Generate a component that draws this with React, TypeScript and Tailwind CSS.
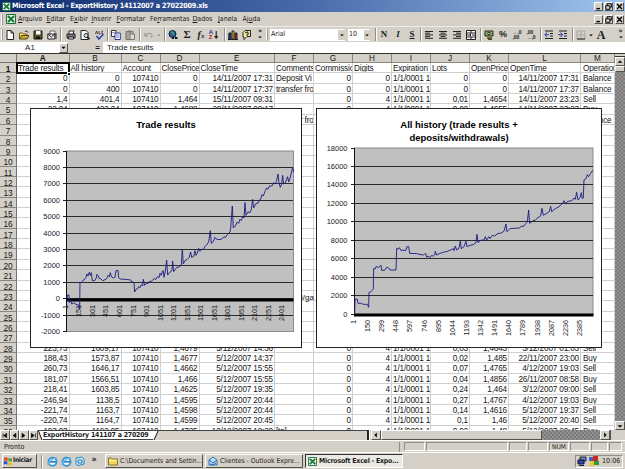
import React from "react";

const raised = "bg-[#d4d0c8] border border-t-white border-l-white border-r-[#55534e] border-b-[#55534e]";
const sunken = "border border-t-[#918e87] border-l-[#918e87] border-r-white border-b-white";
const ui = "font-['DejaVu_Sans_Condensed','DejaVu_Sans',sans-serif]";
const arial = "font-['Liberation_Sans',Arial,sans-serif]";

const Ico = ({ children, s = 10 }: { children: React.ReactNode; s?: number }) => (
  <svg width={s} height={s} viewBox="0 0 10 10" className="block shrink-0" fill="none" stroke="#222" strokeWidth="1">{children}</svg>
);
const Slot = ({ children }: { children: React.ReactNode }) => <div className="flex h-full w-[14px] shrink-0 items-center justify-center">{children}</div>;
const Sep = () => <div className="h-[13px] w-[2px] shrink-0 border-l border-r border-l-[#8f8c85] border-r-white" />;
const Grip = () => <div className="h-[11px] w-[2px] shrink-0 border-l border-r border-l-white border-r-[#9b988f]" />;

const Arrow = ({ d, s = 10 }: { d: string; s?: number }) => (
  <Ico s={s}><path d={d} fill="#000" stroke="none" /></Ico>
);
const DOWN = "M2 4h6l-3 3z";
const UP = "M2 6h6l-3-3z";
const LEFT = "M6 2v6l-3-3z";
const RIGHT = "M4 2v6l3-3z";

function WinButtons() {
  return (
    <div className="flex pr-[1px]">
      <div className={`${raised} mr-[1px] flex h-[9px] w-[9px] items-center justify-center`}><Ico s={7}><path d="M2 8h5" strokeWidth="2" stroke="#000" /></Ico></div>
      <div className={`${raised} mr-[2px] flex h-[9px] w-[9px] items-center justify-center`}><Ico s={7}><path d="M3 4V1h6v5H7M1 4h6v5H1z" strokeWidth="1.4" stroke="#000" /></Ico></div>
      <div className={`${raised} flex h-[9px] w-[9px] items-center justify-center`}><Ico s={7}><path d="M1.5 1.5l7 7M8.500 1.500l-7 7" strokeWidth="1.9" stroke="#000" /></Ico></div>
    </div>
  );
}

const XL = ({ s = 9 }: { s?: number }) => (
  <Ico s={s}><path d="M.5.5h9v9h-9z" fill="#e3f1e3" stroke="#1d6b35" /><path d="M2 2l6 6M8 2L2 8" stroke="#1d7a3a" strokeWidth="2" /></Ico>
);

const menus: [string, string, string, string][] = [
  ["", "A", "rquivo", "w-[28.500px]"], ["", "E", "ditar", "w-[23.500px]"], ["E", "x", "ibir", "w-[21.500px]"],
  ["", "I", "nserir", "w-[25px]"], ["", "F", "ormatar", "w-[33.500px]"], ["Fe", "r", "ramentas", "w-[42.500px]"],
  ["", "D", "ados", "w-[25.500px]"], ["", "J", "anela", "w-[24.500px]"], ["Aj", "u", "da", "w-[25px]"],
];

const Lines = ({ a }: { a: number[] }) => (
  <Ico>{a.map((w, i) => <path key={i} d={`M${w < 0 ? 9 + w : w > 20 ? 5 - (w - 20) / 2 : 1} ${1.5 + i * 1.7}h${w < 0 ? -w : w > 20 ? w - 20 : w}`} />)}</Ico>
);

function Toolbar() {
  return (
    <div className="flex h-[16px] items-center border-t border-t-[#efede8] bg-[#d4d0c8]">
      <div className="flex h-full w-[60px] items-center pl-[1px]"><Grip />
        <Slot><Ico><path d="M2 .5h4l2.500 2.500v6.500H2z" fill="#fff" /><path d="M6 .5V3h2.500" /></Ico></Slot>
        <Slot><Ico><path d="M.5 9V3h3l1 1H8v2" fill="#f5dc6b" stroke="#6f6212" /><path d="M.5 9L2.500 5.500H10L8 9z" fill="#c7a92c" stroke="#544a0b" /><path d="M6 1.500q2-1.500 3 1" /></Ico></Slot>
        <Slot><Ico><path d="M1 1h8v8H1z" fill="#55552b" stroke="#151508" /><path d="M3 1h4.500v3.500H3z" fill="#fff" stroke="none" /><path d="M3 6.500h4V9H3z" fill="#111" stroke="none" /></Ico></Slot>
        <Slot><Ico><path d="M3 1h5v4H3z" fill="#fff" stroke="#666" /><path d="M.8 4h7v5h-7z" fill="#eee" /><path d="M.8 4l3.500 3 3.500-3M9 3v6" /></Ico></Slot>
      </div>
      <Sep />
      <div className="flex h-full w-[45px] items-center pl-[2px]">
        <Slot><Ico><path d="M3 4V1h5L7 4" fill="#fff" /><path d="M1 4h8v4H1z" fill="#777" /><path d="M2.500 7h5v2h-5z" fill="#fff" /></Ico></Slot>
        <Slot><Ico><path d="M1 .5h5l2 2v7H1z" fill="#fff" /><circle cx="6" cy="5.500" r="2" fill="#cfeaf0" /><path d="M7.500 7l2 2.500" strokeWidth="1.600" /></Ico></Slot>
        <Slot><Ico><path d="M1.500 4l1-3 1 3M5 1v3h1.500M9 1H8v3h1" strokeWidth=".8" /><path d="M2.500 6L5 9l4.500-5" stroke="#2340a8" strokeWidth="1.500" /></Ico></Slot>
      </div>
      <Sep />
      <div className="flex h-full w-[30px] items-center">
        <Slot><Ico><path d="M.5.5h4.500v6H.5z" fill="#fff" stroke="#334" /><path d="M4 3h5.300v6.500H4z" fill="#fff" stroke="#2a3a90" /><path d="M5 5h3M5 7h3M1.500 2.500h2" stroke="#2a3a90" strokeWidth=".7" /></Ico></Slot>
        <Slot><Ico><path d="M1 1.500h7v8H1z" fill="#aaa79d" stroke="#77756e" /><path d="M3 .5h3v2H3z" fill="#777" stroke="none" /><path d="M5 4h4.500v5.500H5z" fill="#ddd" stroke="#777" /></Ico></Slot>
      </div>
      <Sep />
      <div className="flex h-full w-[23px] items-center pl-[1px]">
        <Slot><Ico><path d="M1 3v3h3M1.500 5.500q2-3 5-2t1 4" stroke="#918e86" /></Ico></Slot>
        <Ico s={6}><path d="M2 4h6l-3 3z" fill="#888" stroke="none" /></Ico>
      </div>
      <Sep />
      <div className="flex h-full w-[58px] items-center">
        <Slot><Ico><circle cx="4.500" cy="4" r="3.500" fill="#245a9c" stroke="#123" /><path d="M3 2q3 0 2 3" stroke="#45ab58" strokeWidth="1.500" /><path d="M4 8h2M7 8h2.500" stroke="#111" strokeWidth="2" /></Ico></Slot>
        <Slot><span className="font-['Liberation_Serif',serif] text-[11px] font-bold leading-none">Σ</span></Slot>
        <Slot><span className="font-['Liberation_Serif',serif] text-[10px] font-bold italic leading-none">f<span className="text-[7px]">x</span></span></Slot>
        <Slot><span className={`${arial} flex flex-col text-[6px] font-bold leading-[5px]`}><span className="text-[#2a3aa8]">A</span><span className="text-[#a02323]">Z</span></span><Ico s={8}><path d="M4 0v8M2 6.500L4 9l2-2.500" strokeWidth="1.400" /></Ico></Slot>
      </div>
      <Sep />
      <div className="flex h-full w-[40px] items-center">
        <Slot><Ico><path d="M0 3v6.500h10" /><path d="M1 3h2v6H1z" fill="#2437a5" /><path d="M4 1h2v8H4z" fill="#edc92a" /><path d="M7 3h2v6H7z" fill="#b42020" /></Ico></Slot>
        <Slot><Ico><path d="M1 2.500L3 .5h5.500v6H5l-3 3V7H1z" fill="#f5eda4" /><path d="M3.500 3q2-2 2.500 0T5 5v.8" strokeWidth="1.200" /></Ico></Slot>
        <div className="flex w-[12px] flex-col items-center"><span className="text-[7px] font-bold leading-[5px]">»</span><Arrow d={DOWN} s={6} /></div>
      </div>
      <Grip />
      <div className="flex h-full w-[107px] items-center pl-[2px]">
        <div className={`${ui} flex h-[12px] w-[75px] items-center justify-between bg-white pl-[1px] text-[7px]`}>Arial<span className="flex h-[10px] w-[7px] items-center justify-center bg-[#d4d0c8]"><Arrow d={DOWN} s={6} /></span></div>
        <div className={`${ui} ml-[3px] flex h-[12px] w-[22px] items-center justify-between bg-white pl-[1px] text-[7px]`}>10<span className="flex h-[10px] w-[6px] items-center justify-center bg-[#d4d0c8]"><Arrow d={DOWN} s={6} /></span></div>
      </div>
      <Sep />
      <div className="flex h-full w-[43px] items-center font-['Liberation_Serif',serif] text-[9px] font-bold leading-none">
        <Slot>N</Slot><Slot><i>I</i></Slot><Slot><u>S</u></Slot>
      </div>
      <Sep />
      <div className="flex h-full w-[58px] items-center">
        <Slot><Lines a={[8, 5, 8, 5, 8]} /></Slot>
        <Slot><Lines a={[28, 25, 28, 25, 28]} /></Slot>
        <Slot><Lines a={[-8, -5, -8, -5, -8]} /></Slot>
        <Slot><Ico><path d="M.5.5h9v9h-9zM.5 3h9M.5 7h9M5 .5V3M5 7v2.500" fill="#fff" /><path d="M1 5h3M9 5H6M4.500 3.500v3" /></Ico></Slot>
      </div>
      <Sep />
      <div className="flex h-full w-[58px] items-center">
        <Slot><Ico><path d="M1 1h8v5H1z" fill="#8ea864" stroke="#222d14" /><circle cx="5" cy="3.500" r="1.200" fill="#eee" /><path d="M3 8h5M4 9.500h4" stroke="#555010" strokeWidth="1.500" /></Ico></Slot>
        <Slot><span className={`${arial} text-[9px] font-bold leading-none`}>%</span></Slot>
        <Slot><span className={`${arial} text-[5px] font-bold leading-[5px]`}><span className="text-[#2a3aa8]">←</span>,0<br />,00</span></Slot>
        <Slot><span className={`${arial} text-[5px] font-bold leading-[5px]`}>,00<br /><span className="text-[#2a3aa8]">→</span>,0</span></Slot>
      </div>
      <Sep />
      <div className="flex h-full w-[30px] items-center">
        <Slot><Ico><path d="M1 1h8M6 3.500h3M6 6h3M1 8.500h8" /><path d="M5 4.700H1M3 2.500L.8 4.700 3 7" stroke="#2437a5" /></Ico></Slot>
        <Slot><Ico><path d="M1 1h8M6 3.500h3M6 6h3M1 8.500h8" /><path d="M0 4.700h4M2.500 2.500l2.200 2.200L2.500 7" stroke="#2437a5" /></Ico></Slot>
      </div>
      <Sep />
      <div className="flex h-full grow items-center">
        <Slot><Ico><path d="M1 1h8v8H1zM5 1v8M1 5h8" stroke="#aaa79f" /><path d="M1 9h8" /></Ico></Slot>
        <Arrow d={DOWN} s={6} />
        <Slot><span className="font-['Liberation_Serif',serif] text-[12px] font-bold leading-none">A</span></Slot>
      </div>
      <div className="flex w-[9px] flex-col items-center"><span className="text-[7px] font-bold leading-[5px]">»</span><Arrow d={DOWN} s={6} /></div>
    </div>
  );
}

const cols: { n: string; w: string; r: boolean }[] = [
  { n: "A", w: "w-[52.500px]", r: true }, { n: "B", w: "w-[52px]", r: true }, { n: "C", w: "w-[39px]", r: true },
  { n: "D", w: "w-[39px]", r: true }, { n: "E", w: "w-[75.500px]", r: true }, { n: "F", w: "w-[39px]", r: false },
  { n: "G", w: "w-[39px]", r: true }, { n: "H", w: "w-[39px]", r: true }, { n: "I", w: "w-[39px]", r: false },
  { n: "J", w: "w-[39px]", r: true }, { n: "K", w: "w-[39px]", r: true }, { n: "L", w: "w-[72px]", r: true },
  { n: "M", w: "w-[34px]", r: false },
];
const E = "1/1/0001 1";
const data: Record<number, string[]> = {
  1: ["Trade results", "All history", "Account", "ClosePrice", "CloseTime", "Comments", "Commission", "Digits", "Expiration", "Lots", "OpenPrice", "OpenTime", "Operation"],
  2: ["0", "0", "107410", "0", "14/11/2007 17:31", "Deposit Vi", "0", "0", E, "0", "0", "14/11/2007 17:31", "Balance"],
  3: ["0", "400", "107410", "0", "14/11/2007 17:37", "transfer fro", "0", "0", E, "0", "0", "14/11/2007 17:37", "Balance"],
  4: ["1,4", "401,4", "107410", "1,464", "15/11/2007 09:31", "", "0", "4", E, "0,01", "1,4654", "14/11/2007 23:23", "Sell"],
  5: ["22,04", "422,04", "107410", "1,4688", "20/11/2007 09:17", "", "0", "4", E, "0,02", "1,4655", "14/11/2007 23:23", "Buy"],
  6: ["", "", "", "", "", "transfer fro", "", "", "", "", "", "", "Balance"],
  28: ["223,73", "1609,17", "107410", "1,4679", "5/12/2007 14:36", "", "0", "4", E, "0,03", "1,4643", "3/12/2007 01:03", "Sell"],
  29: ["188,43", "1573,87", "107410", "1,4677", "5/12/2007 14:37", "", "0", "4", E, "0,02", "1,485", "22/11/2007 23:00", "Buy"],
  30: ["260,73", "1646,17", "107410", "1,4662", "5/12/2007 15:55", "", "0", "4", E, "0,07", "1,4765", "4/12/2007 19:03", "Sell"],
  31: ["181,07", "1566,51", "107410", "1,466", "5/12/2007 15:55", "", "0", "4", E, "0,04", "1,4856", "26/11/2007 08:58", "Buy"],
  32: ["218,41", "1603,85", "107410", "1,4625", "5/12/2007 19:35", "", "0", "4", E, "0,24", "1,464", "3/12/2007 09:00", "Sell"],
  33: ["-246,94", "1138,5", "107410", "1,4595", "5/12/2007 20:44", "", "0", "4", E, "0,27", "1,4767", "4/12/2007 19:03", "Buy"],
  34: ["-221,74", "1163,7", "107410", "1,4598", "5/12/2007 20:44", "", "0", "4", E, "0,14", "1,4616", "5/12/2007 19:37", "Sell"],
  35: ["-220,74", "1164,7", "107410", "1,4599", "5/12/2007 20:45", "", "0", "4", E, "0,1", "1,46", "5/12/2007 20:40", "Sell"],
  36: ["-193,03", "1192,95", "107410", "1,4725", "10/12/2007 10:20", "[tp]", "0", "4", E, "0,02", "1,48", "5/12/2007 20:45", "Buy"],
};

function Sheet() {
  const rows = Array.from({ length: 36 }, (_, i) => i + 1);
  return (
    <div className={`${arial} relative h-[377px] w-[615px] overflow-hidden bg-white text-[8.200px] text-[#161616]`}>
      <div className="flex h-[10px] border-t border-t-[#333] bg-[#d4d0c8] leading-[10px]">
        <div className="w-[17px] shrink-0 border-b border-r border-[#77746d]" />
        {cols.map((c) => (
          <div key={c.n} className={`${c.w} shrink-0 border-b border-r border-[#8a8780] text-center ${c.n === "A" ? "font-bold" : ""}`}>{c.n}</div>
        ))}
      </div>
      {rows.map((r) => (
        <div key={r} className="flex h-[10.370px] leading-[12px]">
          <div className={`w-[17px] shrink-0 border-b border-r border-b-[#8a8780] border-r-[#77746d] bg-[#d4d0c8] text-center text-[8.300px] ${r === 1 ? "font-bold" : ""}`}>{r}</div>
          {cols.map((c, i) => (
            <div key={c.n} className={`${c.w} shrink-0 overflow-hidden whitespace-nowrap border-b border-r border-[#cfcfcf] pr-[1px] tracking-[-0.160px] ${c.n === "M" ? "pl-[2px]" : "pl-[1px]"} ${c.r && r > 1 ? "text-right" : "text-left"}`}>{data[r]?.[i] ?? ""}</div>
          ))}
        </div>
      ))}
      <div className="absolute left-[16px] top-[9px] h-[12px] w-[54px] border-2 border-black" />
      <div className="absolute left-[67px] top-[19px] h-[3px] w-[3px] border-l border-t border-white bg-black" />
      <div className="absolute left-[301px] top-[239px] h-[10px] text-[8px] leading-[11px]">l/ga</div>
      <div className="absolute left-[30px] top-[55px] h-[240px] w-[272px] border border-[#222] bg-white"><Chart1 /></div>
      <div className="absolute left-[316px] top-[55px] h-[240px] w-[286px] border border-[#222] bg-white"><Chart2 /></div>
    </div>
  );
}

const s1 = "200,328 203,315 207,315 208,338 212,330 215,342 222,338 228,343 236,345 237,355 239,357 240,278 244,277 248,272 252,270 258,262 261,252 264,258 268,247 271,256 274,248 277,272 284,272 288,266 291,253 294,256 297,265 303,267 308,272 318,268 322,263 324,256 328,260 331,248 334,260 340,264 345,262 348,242 354,241 356,263 361,267 375,268 392,270 396,276 402,277 404,306 408,298 413,296 416,290 420,293 424,284 428,288 430,268 434,286 440,280 444,281 448,274 454,274 462,266 468,268 472,260 478,262 480,250 484,256 487,244 490,242 492,262 496,244 500,210 503,255 508,248 512,246 516,240 518,213 521,245 526,238 530,232 536,232 544,225 547,178 550,222 555,212 562,208 568,202 572,186 575,202 582,198 585,182 588,196 592,190 596,175 600,184 606,178 610,178 615,170 620,164 626,156 631,122 634,160 640,155 645,142 650,148 660,149 668,145 672,140 676,143 682,134 690,126 692,115 697,48 700,114 706,108 712,96 716,100 720,88 724,92 728,80 732,84 735,38 738,76 744,66 750,68 754,58 758,28 761,54 768,40 774,40 778,30 782,28 786,14 790,18 796,2 800,-6 804,-2 808,-12 816,-12 822,-22 826,-18 830,-28 834,-48 837,-22 841,-8 845,-18 848,-44 851,-18 856,-22 863,-40 866,-24 871,-38 876,-60 878,-68 881,-54";
const s2 = "134,521 135,478 142,478 144,490 152,490 160,493 172,493 176,502 177,458 184,454 188,450 190,446 191,386 195,387 198,380 206,382 213,376 215,391 224,391 230,382 236,384 240,390 258,390 260,325 264,328 268,323 273,331 288,331 291,320 296,320 299,340 320,341 338,345 344,343 347,340 350,352 354,348 360,353 364,347 370,348 374,345 376,334 380,345 390,340 400,337 412,334 424,329 430,326 432,332 436,318 440,330 447,325 451,302 454,326 462,320 468,304 471,320 480,316 490,314 498,308 501,283 504,308 512,301 522,300 526,290 530,300 537,290 540,296 547,286 554,288 564,280 572,280 582,274 588,252 591,275 600,266 614,265 628,264 636,258 640,260 648,250 652,246 656,210 659,250 668,243 676,240 684,233 692,228 696,205 700,226 710,220 718,215 722,199 725,215 736,206 744,202 752,196 758,190 762,182 766,190 774,184 786,182 792,174 796,178 800,157 804,180 810,174 814,158 817,176 820,174 822,120 828,116 832,104 836,110 842,100 845,96 848,91";
const VLabels = ({ t, x0, dx, y }: { t: (string | number)[]; x0: number; dx: number; y: number }) => (
  <>{t.map((v, i) => <text key={i} transform={`translate(${x0 + i * dx + 2.600} ${y}) rotate(-90)`} textAnchor="end" fontSize="7.200">{v}</text>)}</>
);

function Chart1() {
  const g = Array.from({ length: 12 }, (_, i) => 9000 - i * 1000);
  return (
    <svg width="270" height="238" viewBox="31 109 270 238" className="block" fill="#1a1a1a">
      <text x="166" y="128" textAnchor="middle" fontSize="9.600" fontWeight="700" fill="#000">Trade results</text>
      <rect x="66.500" y="151" width="227" height="180.500" fill="#c0c0c0" stroke="#8a8a8a" strokeWidth="1" />
      {g.map((v, i) => {
        const y = Math.floor(151 + i * 16.420) + 0.5;
        return <g key={v}>{i > 0 && i < 11 && <path d={`M66 ${y}H293`} stroke="#2a2a2a" />}<path d={`M63 ${y}h4`} stroke="#222" /><text x="60" y={y + 2.500} textAnchor="end" fontSize="7.500">{v}</text></g>;
      })}
      <path d="M66.500 151V332" stroke="#111" />
      <rect x="66" y="298.500" width="227.500" height="3" fill="#000" />
      <VLabels t={[1, 151, 301, 451, 601, 751, 901, 1051, 1201, 1351, 1501, 1651, 1801, 1951, 2101, 2251, 2401]} x0={65.300} dx={13.520} y={305} />
      <polyline points={s1} transform="translate(0 190) scale(.3333)" fill="none" stroke="#1a1a82" strokeWidth="2.700" />
    </svg>
  );
}

function Chart2() {
  const g = Array.from({ length: 10 }, (_, i) => 18000 - i * 2000);
  return (
    <svg width="284" height="238" viewBox="317 109 284 238" className="block" fill="#1a1a1a">
      <text x="459" y="128" textAnchor="middle" fontSize="9.500" fontWeight="700" fill="#000">All history (trade results +</text>
      <text x="459" y="141" textAnchor="middle" fontSize="9.500" fontWeight="700" fill="#000">deposits/withdrawals)</text>
      <rect x="354.500" y="148" width="238.500" height="167" fill="#c0c0c0" stroke="#8a8a8a" />
      {g.map((v, i) => {
        const y = Math.floor(148 + i * 18.450) + 0.5;
        return <g key={v}>{i > 0 && <path d={`M354 ${y}H593`} stroke="#2a2a2a" />}<path d={`M351 ${y}h4`} stroke="#222" /><text x="347.500" y={y + 2.500} textAnchor="end" fontSize="7.500">{v}</text></g>;
      })}
      <path d="M354.500 148V316" stroke="#111" />
      <rect x="354" y="313.500" width="239.500" height="3" fill="#000" />
      <VLabels t={[1, 150, 299, 448, 597, 746, 895, 1044, 1193, 1342, 1491, 1640, 1789, 1938, 2087, 2236, 2385]} x0={353.300} dx={14.130} y={320} />
      <polyline points={s2} transform="translate(310 140) scale(.3333)" fill="none" stroke="#1a1a82" strokeWidth="2.700" />
    </svg>
  );
}

const hatch = "bg-[#858585] bg-[conic-gradient(#7b7b7b_25%,#929292_0_50%,#7b7b7b_0_75%,#929292_0)] bg-[length:4px_4px]";

const IE = () => <Ico s={11}><circle cx="5" cy="5.200" r="3.700" fill="#e8f5ff" stroke="#3093d6" strokeWidth="1.600" /><path d="M2 5.300h6.500" stroke="#2378bd" strokeWidth="1.400" /><path d="M.5 8Q2 3 9 1.500" stroke="#5cb6ec" /></Ico>;

function Task({ icon, children, active = false }: { icon: React.ReactNode; children: React.ReactNode; active?: boolean }) {
  return (
    <div className={`flex h-[14px] w-[98px] shrink-0 items-center gap-[2px] overflow-hidden whitespace-nowrap pl-[2px] ${active ? "border border-b-white border-l-[#333] border-r-white border-t-[#333] bg-[#ebe9e4] text-[6.900px] font-bold tracking-[-0.180px]" : `${raised} text-[6.800px]`}`}>
      {icon}<span>{children}</span>
    </div>
  );
}

export default function App() {
  const panes = ["w-[21px]", "w-[82px]", "w-[18px]", "w-[20px]", "w-[20px]", "w-[20px]", "w-[17px]", "w-[13px]"];
  return (
    <div className={`${ui} flex h-[469px] w-[625px] flex-col overflow-hidden bg-[#d4d0c8] text-[7px] text-[#1a1a1a]`}>
      <div className="flex h-[12px] shrink-0 items-center bg-linear-to-r from-[#0c2a6d] via-[#4a6cab] to-[#a2c6ee] pl-[2px]">
        <XL />
        <span className="ml-[1px] grow whitespace-nowrap text-[7.200px] font-bold leading-none tracking-[-0.240px] text-white">Microsoft Excel - ExportHistory 14112007 a 27022009.xls</span>
        <WinButtons />
      </div>
      <div className="flex h-[14px] shrink-0 items-center pl-[1px]">
        <Grip /><div className="flex w-[15px] justify-center"><XL s={10} /></div>
        <div className="flex grow whitespace-nowrap pt-[1px] leading-none">
          {menus.map(([a, b, c, w]) => <span key={a + b + c} className={w}>{a}<u>{b}</u>{c}</span>)}
        </div>
        <WinButtons />
      </div>
      <Toolbar />
      <div className={`${arial} flex h-[11px] shrink-0 bg-[#d4d0c8] text-[8px] leading-[11px]`}>
        <div className="flex w-[68px] items-center bg-white pl-[1px]"><span className="grow text-center text-[8px]">A1</span><span className={`${raised} flex h-[10px] w-[9px] items-center justify-center`}><Arrow d={DOWN} s={7} /></span></div>
        <div className="w-[35px] pr-[3px] text-right font-bold">=</div>
        <div className="grow bg-white pl-[4px]">Trade results</div>
      </div>
      <div className="flex h-[377px] shrink-0">
        <Sheet />
        <div className="flex w-[10px] flex-col border-t border-t-[#333]">
          <div className="h-[3px] border-b border-b-[#333]" />
          <div className={`${raised} flex h-[9px] items-center justify-center`}><Arrow d={UP} s={8} /></div>
          <div className={`${raised} h-[6px]`} />
          <div className={`${hatch} grow`} />
          <div className={`${raised} flex h-[9px] items-center justify-center`}><Arrow d={DOWN} s={8} /></div>
        </div>
      </div>
      <div className="flex h-[10px] shrink-0 items-stretch">
        {["M3 2v6M8 2v6L4 5z", "M7 2v6L3 5z", "M3 2v6l4-3z", "M2 2v6l4-3zM8 2v6"].map((d) => (
          <div key={d} className={`${raised} flex w-[9.500px] items-center justify-center`}><Ico s={7}><path d={d} fill="#000" stroke="#000" /></Ico></div>
        ))}
        <div className="flex border-t border-t-[#444]">
          <svg width="5" height="9" className="block"><path d="M0 0h5v9h-1z" fill="#fff" /><path d="M.5 0L4 9" stroke="#111" /></svg>
          <span className="h-[9px] w-[110px] whitespace-nowrap border-b border-b-[#444] bg-white text-[6.900px] font-bold leading-[8px] tracking-[-0.180px]">ExportHistory 141107 a 270209</span>
          <svg width="6" height="9" className="block"><path d="M0 0h5L1 9H0z" fill="#fff" /><path d="M5 0L1 9" stroke="#111" /></svg>
        </div>
        <div className="grow border-t border-t-[#444]" />
        <div className="mr-[1px] w-[3px] border-l-2 border-l-[#222] bg-white" />
        <div className={`${raised} flex w-[10px] items-center justify-center`}><Arrow d={LEFT} s={8} /></div>
        <div className={`${raised} w-[161px]`} />
        <div className={`${hatch} w-[58px]`} />
        <div className={`${raised} flex w-[10px] items-center justify-center`}><Arrow d={RIGHT} s={8} /></div>
        <div className="mr-[13px] w-[2px] border-l border-l-[#555]" />
      </div>
      <div className="flex h-[12px] shrink-0 items-center border-t border-t-white pl-[4px]">
        <span className="grow pt-[1px] leading-none">Pronto</span>
        <div className="mr-[4px] h-[10px] border-l border-l-[#918e87]" />
        {panes.map((w, i) => <div key={i} className={`${w} ${sunken} mr-[1px] h-[9px] text-center text-[6.700px] leading-[8px]`}>{i === 4 ? "NUM" : ""}</div>)}
        <div className="w-[2px]" />
      </div>
      <div className="flex h-[17px] shrink-0 items-center border-t border-t-white pl-[2px]">
        <div className={`${raised} flex h-[14px] w-[35px] shrink-0 items-center text-[6.600px] font-bold tracking-[-0.300px]`}>
          <Ico><path d="M1 2q2-1.500 3.700 0v3Q3 4 1 5z" fill="#e44a24" stroke="none" /><path d="M5.300 2Q7 3 9 2v3Q7 6 5.300 5z" fill="#4ba333" stroke="none" /><path d="M.7 5.700q2-1.300 3.700 0v3q-2-1.300-3.700 0z" fill="#2858c9" stroke="none" /><path d="M5 5.900q2 1 3.700 0v3q-2 1-3.700 0z" fill="#f0bd23" stroke="none" /></Ico><span>Iniciar</span>
        </div>
        <div className="ml-[4px]"><Sep /></div>
        <div className="flex w-[62px] items-center pl-[2px]">
          <Slot><IE /></Slot><Slot><IE /></Slot>
          <Slot><Ico s={10}><path d="M1 2l6-1 2 2v5l-6 1.500L1 8z" fill="#d2eafc" stroke="#2d83bd" /><path d="M3 4h4v3H3z" stroke="#247bb8" /></Ico></Slot>
          <span className="w-[14px] pb-[3px] text-center text-[9px] font-bold leading-none">»</span>
        </div>
        <div className="flex grow gap-[2px]">
          <Task icon={<Ico><path d="M.5 9V2h3l1 1h5v6z" fill="#f4d55e" stroke="#8a7420" /><path d="M1 4.500h8" stroke="#fff3b0" /></Ico>}>C:\Documents and Settin...</Task>
          <Task icon={<Ico><path d="M1 4l4-3 4 3v5H1z" fill="#bfe0fa" stroke="#2875b8" /><path d="M1 4l4 3 4-3M2 8q3 2 6-1" stroke="#2b66a8" /></Ico>}>Clientes - Outlook Expre...</Task>
          <Task active icon={<XL s={9} />}>Microsoft Excel - Expo...</Task>
        </div>
        <div className={`${sunken} mr-[2px] flex h-[13px] w-[48px] items-center pl-[1px]`}>
          <Ico><path d="M3 1h6v4H3z" fill="#6f86c4" stroke="#223" /><path d="M1 4h6v4H1z" fill="#2d49a8" stroke="#113" /><path d="M2 9.500h5" /></Ico>
          <div className="ml-[2px]"><Ico><path d="M0 1h4v4H0z" fill="#3c62cf" stroke="none" /><path d="M4 0h5v5H4z" fill="#d3271c" stroke="none" /><path d="M1 5h4v5H1z" fill="#eac729" stroke="none" /><path d="M5 5h5v4H5z" fill="#2c9b38" stroke="none" /></Ico></div>
          <span className="ml-[3px] leading-none">10:06</span>
        </div>
      </div>
    </div>
  );
}
